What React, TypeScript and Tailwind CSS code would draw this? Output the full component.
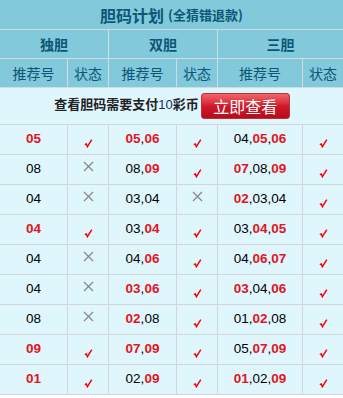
import React from "react";

const rows: [string, boolean, string, boolean, string, boolean][] = [
  ["r05", true, "r05,r06", true, "04,r05,r06", true],
  ["08", false, "08,r09", true, "r07,08,r09", true],
  ["04", false, "03,04", false, "r02,03,04", true],
  ["r04", true, "03,r04", true, "03,r04,r05", true],
  ["04", false, "04,r06", true, "04,r06,r07", true],
  ["04", false, "r03,r06", true, "r03,04,r06", true],
  ["08", false, "r02,08", true, "01,r02,08", true],
  ["r09", true, "r07,r09", true, "05,r07,r09", true],
  ["r01", true, "02,r09", true, "r01,02,r09", true],
];

function Nums({ s }: { s: string }) {
  const parts = s.split(",");
  return (
    <span className="font-['Liberation_Sans',Arial,sans-serif] text-[13.5px]">
      {parts.map((p, i) => {
        const red = p.startsWith("r");
        const t = red ? p.slice(1) : p;
        return (
          <React.Fragment key={i}>
            {i > 0 && <span className="text-black">,</span>}
            <span className={red ? "font-bold text-[#e3141e]" : "text-black"}>{t}</span>
          </React.Fragment>
        );
      })}
    </span>
  );
}

function Status({ ok }: { ok: boolean }) {
  return ok ? (
    <svg width="9" height="10" viewBox="0 0 9 10" className="translate-y-[4px]">
      <path d="M0.8 5.6 L2.2 4.9 L3.4 7.6 L7.8 0.6" fill="none" stroke="#ff0000" strokeWidth="1.5" strokeLinejoin="miter" />
    </svg>
  ) : (
    <svg width="11" height="11" viewBox="0 0 11 11" className="-translate-y-[3px]">
      <path d="M1 1 L10 10 M10 1 L1 10" stroke="#8a8a8a" strokeWidth="1.3" />
    </svg>
  );
}

const cell = "flex items-center justify-center border-r border-b border-[#d2d6d8]";
const hcell = "flex items-center justify-center border-r border-b border-[#cfdde2]";

export default function App() {
  return (
    <div className="w-[343px] h-[398px] bg-white font-['Noto_Sans_CJK_SC',sans-serif]">
      <div className="bg-[#82c9dc] text-[#0c5775]">
        <div className="h-[30px] flex items-center justify-center border-b border-[#cfdde2] font-bold">
          <span className="text-[16px]">胆码计划</span>
          <span className="text-[13px] ml-[4px]">(全猜错退款)</span>
        </div>
        <div className="grid grid-cols-[109px_109px_125px] h-[29px] text-[14px] font-bold">
          <div className={hcell}>独胆</div>
          <div className={hcell}>双胆</div>
          <div className="flex items-center justify-center border-b border-[#cfdde2]">三胆</div>
        </div>
        <div className="grid grid-cols-[68px_41px_68px_41px_85px_40px] h-[29px] text-[14px]">
          <div className={hcell}>推荐号</div>
          <div className={hcell}>状态</div>
          <div className={hcell}>推荐号</div>
          <div className={hcell}>状态</div>
          <div className={hcell}>推荐号</div>
          <div className="flex items-center justify-center border-b border-[#cfdde2]">状态</div>
        </div>
      </div>
      <div className="bg-[#dff6fd]">
        <div className="h-[37px] flex items-center justify-center border-b border-[#d2d6d8] pl-[1px]">
          <span className="text-[13px] font-bold text-[#222] mt-[-3px]">
            查看胆码需要支付<span className="font-['Liberation_Sans',Arial,sans-serif] font-normal text-[#1b2a6b]">10</span>彩币
          </span>
          <div className="ml-[2px] w-[89px] h-[26px] rounded-[3px] bg-gradient-to-b from-[#f0636a] via-[#d3162a] to-[#b50d1c] flex items-center justify-center text-white text-[16px] border border-[#c2303a]">
            立即查看
          </div>
        </div>
        {rows.map((r, i) => (
          <div key={i} className="grid grid-cols-[68px_41px_68px_41px_85px_40px] h-[30px]">
            <div className={cell}><Nums s={r[0]} /></div>
            <div className={cell}><Status ok={r[1]} /></div>
            <div className={cell}><Nums s={r[2]} /></div>
            <div className={cell}><Status ok={r[3]} /></div>
            <div className={cell}><Nums s={r[4]} /></div>
            <div className="flex items-center justify-center border-b border-[#d2d6d8]"><Status ok={r[5]} /></div>
          </div>
        ))}
      </div>
    </div>
  );
}
